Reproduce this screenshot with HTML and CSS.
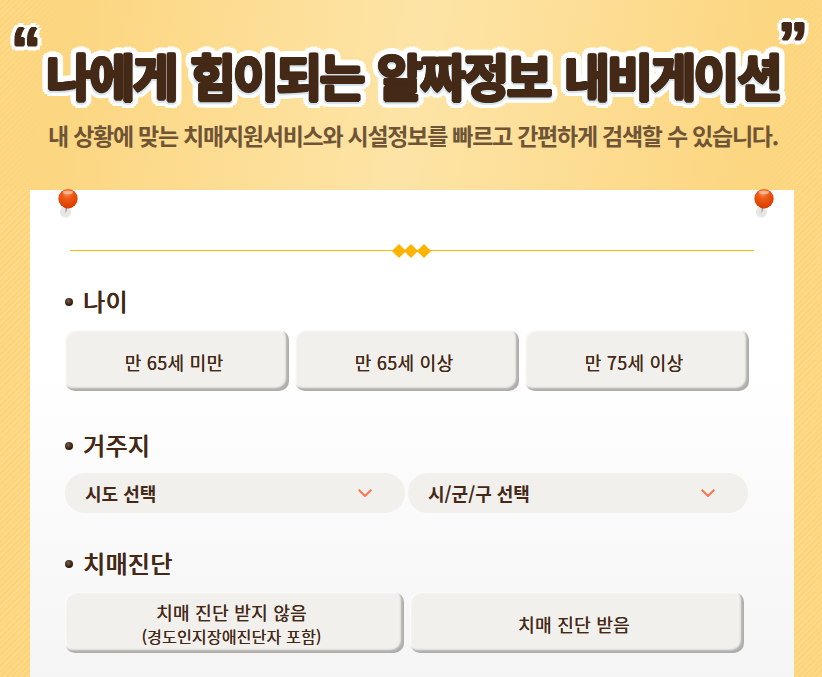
FILE: index.html
```html
<!DOCTYPE html>
<html lang="ko">
<head>
  <meta charset="UTF-8">
  <title>나에게 힘이되는 알짜정보 내비게이션</title>
  <link rel="stylesheet" href="styles.css">
</head>
<body>
  <!-- 상단 타이틀 -->
  <header class="head">
    <h1 class="title">
      <span class="quote quote-open">“</span>
      나에게 힘이되는 알짜정보 내비게이션
      <span class="quote quote-close">”</span>
    </h1>
    <p class="sub">내 상황에 맞는 치매지원서비스와 시설정보를 빠르고 간편하게 검색할 수 있습니다.</p>
  </header>

  <main class="card">
    <svg class="pin pin-left" width="24" height="30" viewBox="0 0 24 30"><use href="#pinShape"/></svg>
    <svg class="pin pin-right" width="24" height="30" viewBox="0 0 24 30"><use href="#pinShape"/></svg>

    <div class="rule">
      <span class="diamond"></span><span class="diamond"></span><span class="diamond"></span>
    </div>

    <section class="group group-age">
      <h2 class="label">나이</h2>
      <div class="row">
        <button class="btn">만 65세 미만</button>
        <button class="btn">만 65세 이상</button>
        <button class="btn">만 75세 이상</button>
      </div>
    </section>

    <section class="group group-area">
      <h2 class="label">거주지</h2>
      <div class="row row-select">
        <div class="select">시도 선택
          <svg class="chev" width="14" height="8" viewBox="0 0 14 8"><path d="M.7.7 7 7 13.3.7" fill="none" stroke="#ff7350" stroke-width="2"/></svg>
        </div>
        <div class="select">시/군/구 선택
          <svg class="chev" width="14" height="8" viewBox="0 0 14 8"><path d="M.7.7 7 7 13.3.7" fill="none" stroke="#ff7350" stroke-width="2"/></svg>
        </div>
      </div>
    </section>

    <section class="group group-diag">
      <h2 class="label">치매진단</h2>
      <div class="row row-two">
        <button class="btn btn-wide">치매 진단 받지 않음<small>(경도인지장애진단자 포함)</small></button>
        <button class="btn btn-narrow">치매 진단 받음</button>
      </div>
    </section>
  </main>

  <svg width="0" height="0" class="defs">
    <defs>
      <radialGradient id="pinBall" cx="45%" cy="25%" r="75%">
        <stop offset="0" stop-color="#f98a5a"/>
        <stop offset="0.35" stop-color="#ee5a14"/>
        <stop offset="1" stop-color="#d83a00"/>
      </radialGradient>
      <g id="pinShape">
        <circle cx="9.5" cy="23" r="5.5" fill="#e6e6e4"/>
        <path d="M9.6 17h2.2l-2.2 8z" fill="#8d8d8d"/>
        <circle cx="12" cy="9.7" r="9.7" fill="url(#pinBall)"/>
        <ellipse cx="12" cy="3.4" rx="5" ry="1.9" fill="#ffc6a8" opacity=".75"/>
      </g>
    </defs>
  </svg>
</body>
</html>
```

FILE: styles.css
```css
* {
  box-sizing: border-box;
}
html, body {
  height: 100%;
}
body {
  margin: 0;
  display: flex;
  flex-direction: column;
  overflow: hidden;
  font-family: "Noto Sans CJK KR", "Noto Sans", sans-serif;
  color: #452917;
  background-color: #fdd57e;
  background-image: repeating-linear-gradient(135deg, #fed988 0, #fed988 2px, #fcd47c 2px, #fcd47c 4px);
}

/* 상단 타이틀 */
.head {
  height: 190px;
  flex: none;
  text-align: center;
  padding: 44px 0 0 4px;
  background: linear-gradient(100deg, rgba(252, 214, 128, 0) 0, #fcd680 70px, #fde4a6 50%, #fcd680 calc(100% - 70px), rgba(252, 214, 128, 0) 100%);
}
.title {
  position: relative;
  display: inline-block;
  margin: 0;
  font-size: 50px;
  line-height: 60px;
  font-weight: 700;
  letter-spacing: -2.8px;
  word-spacing: 3px;
  white-space: nowrap;
  color: #452917;
  text-shadow:
    1.5px 0 0 #452917, -1.5px 0 0 #452917, 0 1.5px 0 #452917, 0 -1.5px 0 #452917,
    1px 1px 0 #452917, -1px 1px 0 #452917, 1px -1px 0 #452917, -1px -1px 0 #452917,
    0 4px 1px #d3e2ea, 2px 3px 1px #d3e2ea, -2px 3px 1px #d3e2ea,
    7px 0 0 #fff, -7px 0 0 #fff, 0 7px 0 #fff, 0 -7px 0 #fff,
    5px 5px 0 #fff, -5px 5px 0 #fff, 5px -5px 0 #fff, -5px -5px 0 #fff,
    6.5px 2.7px 0 #fff, -6.5px 2.7px 0 #fff, 6.5px -2.7px 0 #fff, -6.5px -2.7px 0 #fff,
    2.7px 6.5px 0 #fff, -2.7px 6.5px 0 #fff, 2.7px -6.5px 0 #fff, -2.7px -6.5px 0 #fff;
}
.quote {
  position: absolute;
  font-family: "Liberation Sans", sans-serif;
  font-size: 60px;
  line-height: 24px;
  font-weight: 700;
  letter-spacing: 0;
  text-shadow:
    1px 0 0 #452917, -1px 0 0 #452917, 0 1px 0 #452917, 0 -1px 0 #452917,
    5px 0 0 #fff, -5px 0 0 #fff, 0 5px 0 #fff, 0 -5px 0 #fff,
    3.5px 3.5px 0 #fff, -3.5px 3.5px 0 #fff, 3.5px -3.5px 0 #fff, -3.5px -3.5px 0 #fff;
}
.quote-open {
  left: -35px;
  top: -7px;
}
.quote-close {
  right: -28px;
  top: -12px;
}
.sub {
  margin: 0;
  padding: 15px 0 0;
  font-size: 23px;
  line-height: 32px;
  font-weight: 700;
  letter-spacing: -1.25px;
  color: #6f5536;
}

/* 본문 카드 */
.card {
  position: relative;
  flex: 1;
  width: 764px;
  margin-left: 30px;
  padding: 60px 35px 0;
  background: linear-gradient(#fff 0, #fff 170px, #f5f5f5 100%);
}
.pin {
  position: absolute;
  top: -1px;
}
.pin-left {
  left: 26px;
}
.pin-right {
  right: 18px;
}
.defs {
  position: absolute;
}
.rule {
  display: flex;
  justify-content: center;
  height: 1px;
  margin: 0 5px;
  padding-right: 2px;
  background: #ffb900;
}
.diamond {
  width: 10px;
  height: 10px;
  margin: -4px 1.25px 0;
  background: #ffb200;
  transform: rotate(45deg);
}
.group-age {
  margin-top: 33px;
}
.group-area {
  margin-top: 37px;
}
.group-diag {
  margin-top: 33px;
}
.label {
  position: relative;
  margin: 0;
  padding-left: 18px;
  font-size: 24px;
  line-height: 34px;
  font-weight: 500;
  letter-spacing: .3px;
  text-shadow: .3px 0 0 currentColor;
}
.label::before {
  content: "";
  position: absolute;
  left: 0;
  top: 14px;
  width: 8px;
  height: 8px;
  border-radius: 50%;
  background: radial-gradient(circle at 40% 35%, #7a5a48, #2f1a0c 65%);
}
.row {
  display: flex;
  gap: 6px;
  margin-top: 12px;
}
.row-select {
  gap: 3px;
  margin-top: 11px;
}
.btn {
  width: 224px;
  height: 61px;
  padding: 2px 6px 0 0;
  border: 0;
  border-radius: 10px;
  font-family: inherit;
  font-size: 18px;
  line-height: 24px;
  letter-spacing: .3px;
  color: #452917;
  background: #f1f0ed;
  box-shadow: inset -3px -3px 2px #b0aeab, inset 1px 1px 2px #fff;
  text-shadow: .2px 0 0 currentColor;
}
.btn-wide {
  width: 339px;
}
.btn-narrow {
  width: 334px;
}
.btn small {
  display: block;
  font-size: 16px;
  letter-spacing: .2px;
}
.select {
  display: flex;
  align-items: center;
  justify-content: space-between;
  width: 340px;
  height: 40px;
  padding: 0 33px 0 20px;
  border-radius: 20px;
  background: #f1f0ed;
  font-size: 18px;
  font-weight: 700;
}
```
